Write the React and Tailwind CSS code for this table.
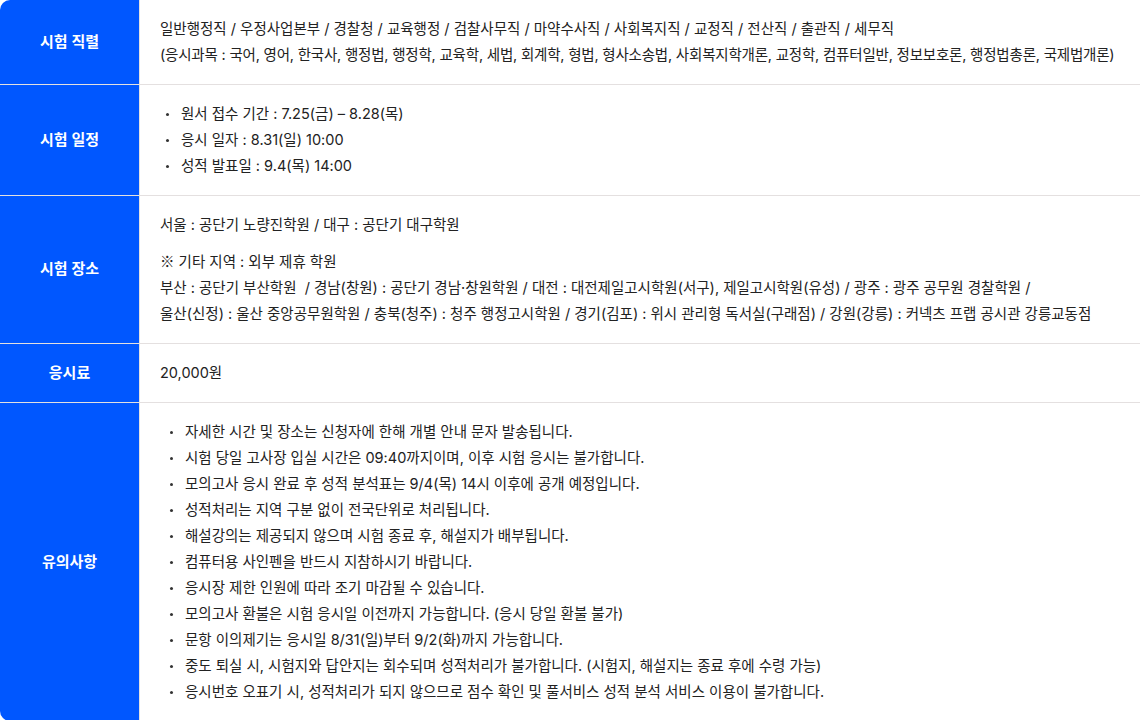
import React from 'react';

const ROWS_NOTICE = [
  '자세한 시간 및 장소는 신청자에 한해 개별 안내 문자 발송됩니다.',
  '시험 당일 고사장 입실 시간은 09:40까지이며, 이후 시험 응시는 불가합니다.',
  '모의고사 응시 완료 후 성적 분석표는 9/4(목) 14시 이후에 공개 예정입니다.',
  '성적처리는 지역 구분 없이 전국단위로 처리됩니다.',
  '해설강의는 제공되지 않으며 시험 종료 후, 해설지가 배부됩니다.',
  '컴퓨터용 사인펜을 반드시 지참하시기 바랍니다.',
  '응시장 제한 인원에 따라 조기 마감될 수 있습니다.',
  '모의고사 환불은 시험 응시일 이전까지 가능합니다. (응시 당일 환불 불가)',
  '문항 이의제기는 응시일 8/31(일)부터 9/2(화)까지 가능합니다.',
  '중도 퇴실 시, 시험지와 답안지는 회수되며 성적처리가 불가합니다. (시험지, 해설지는 종료 후에 수령 가능)',
  '응시번호 오표기 시, 성적처리가 되지 않으므로 점수 확인 및 풀서비스 성적 분석 서비스 이용이 불가합니다.'
];

const SCHEDULE = [
  '원서 접수 기간 : 7.25(금) – 8.28(목)',
  '응시 일자 : 8.31(일) 10:00',
  '성적 발표일 : 9.4(목) 14:00'
];

function Row({ title, children, last }) {
  return (
    <div className={`flex ${last ? '' : 'border-b border-[#e4e0e0]'}`}>
      <div className="flex w-[140px] shrink-0 items-center justify-center border-r border-[#e4e0e0] bg-[#0057ff] text-[15px] font-semibold text-white">
        {title}
      </div>
      <div className="flex-1 px-5 py-4 text-[14.5px] leading-[26px] text-[#222]">{children}</div>
    </div>
  );
}

function Bullets({ items, narrow }) {
  return (
    <ul className={narrow ? 'pl-[6px]' : 'pl-[10px]'}>
      {items.map((item) => (
        <li key={item} className="flex items-center">
          <span className="flex w-[15px] shrink-0">
            <span className="h-[3px] w-[3px] rounded-full bg-[#333]" />
          </span>
          <span className="whitespace-nowrap">{item}</span>
        </li>
      ))}
    </ul>
  );
}

export default function App() {
  return (
    <div className="h-[720px] w-[1140px] bg-white" style={{ fontFamily: 'Inter, "Noto Sans CJK KR", sans-serif' }}>
      <div className="overflow-hidden rounded-l-[10px]">
        <Row title="시험 직렬">
          <p>일반행정직 / 우정사업본부 / 경찰청 / 교육행정 / 검찰사무직 / 마약수사직 / 사회복지직 / 교정직 / 전산직 / 출관직 / 세무직</p>
          <p className="whitespace-nowrap tracking-[-0.2px]">(응시과목 : 국어, 영어, 한국사, 행정법, 행정학, 교육학, 세법, 회계학, 형법, 형사소송법, 사회복지학개론, 교정학, 컴퓨터일반, 정보보호론, 행정법총론, 국제법개론)</p>
        </Row>
        <Row title="시험 일정">
          <Bullets items={SCHEDULE} narrow />
        </Row>
        <Row title="시험 장소">
          <p>서울 : 공단기 노량진학원 / 대구 : 공단기 대구학원</p>
          <p className="mt-[10px]">
            <span className="font-['Noto_Sans_CJK_KR']">※</span> 기타 지역 : 외부 제휴 학원
          </p>
          <p className="whitespace-nowrap">부산 : 공단기 부산학원{'\u00a0'} / 경남(창원) : 공단기 경남·창원학원 / 대전 : 대전제일고시학원(서구), 제일고시학원(유성) / 광주 : 광주 공무원 경찰학원 /</p>
          <p className="whitespace-nowrap">울산(신정) : 울산 중앙공무원학원 / 충북(청주) : 청주 행정고시학원 / 경기(김포) : 위시 관리형 독서실(구래점) / 강원(강릉) : 커넥츠 프랩 공시관 강릉교동점</p>
        </Row>
        <Row title="응시료">
          <p>20,000원</p>
        </Row>
        <Row title="유의사항" last>
          <Bullets items={ROWS_NOTICE} />
        </Row>
      </div>
    </div>
  );
}
